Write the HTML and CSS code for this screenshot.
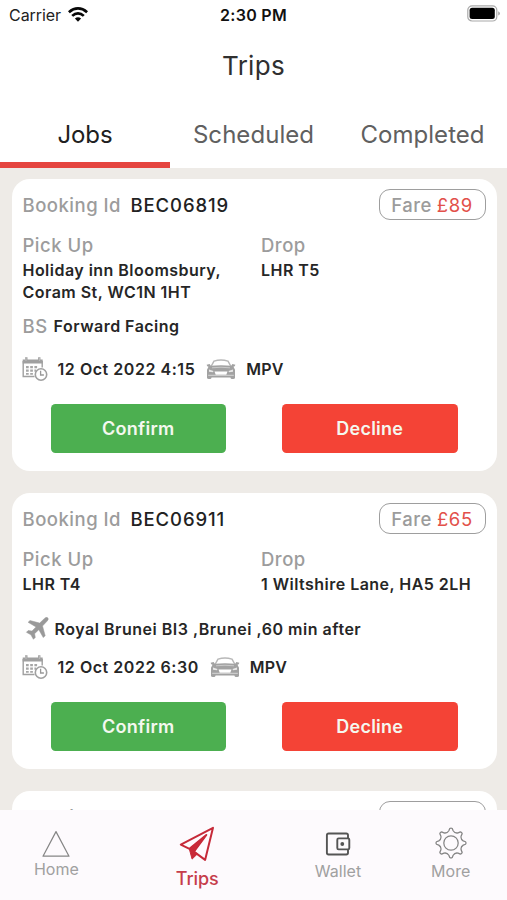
FILE: index.html
```html
<!DOCTYPE html>
<html lang="en">
<head>
<meta charset="utf-8">
<title>Trips</title>
<link rel="stylesheet" href="styles.css">
</head>
<body>
<svg class="defs" aria-hidden="true">
  <symbol id="calendar" viewBox="0 0 26 26">
    <path d="M1.200 5v15.500h11.300M20.200 5v6.500" fill="none" stroke="#a0a0a0" stroke-width="1.400"/>
    <path d="M.7 3.500h2.500V1.200h2.300v2.300h10.600V1.200h2.300v2.300h2.300v4H.7z" fill="#a0a0a0"/>
    <path d="M4 1v4M17.500 1v4" stroke="#b9b9b9" stroke-width="1.200"/>
    <path d="M4 10h2.700v2.300H4zM8.200 10h2.700v2.300H8.200zM12.400 10h2.700v2.300h-2.700zM4 13.500h2.700v2.300H4zM8.200 13.500h2.700v2.300H8.200zM12.400 13.500h1.700v2.300h-1.700zM4 17h2.700v1.700H4zM8.200 17h2.700v1.700H8.200z" fill="#a6a6a6"/>
    <circle cx="19" cy="18.500" r="5.700" fill="#fff" stroke="#a0a0a0" stroke-width="1.600"/>
    <path d="M18.600 14.800v4.200h3.300" fill="none" stroke="#989898" stroke-width="1.300"/>
  </symbol>
  <symbol id="car" viewBox="0 0 30 20">
    <path d="M5 7.500 8 2.100Q15-.3 22 2.100l3 5.400" fill="#fff" stroke="#b8b8b8" stroke-width="1.500"/>
    <path d="M.6 5.800 3.600 5l1.200 1.800q10.200-1 20.400 0L26.400 5l3 .8-.7 1.500-1.200.4 1.500 3.100v8.100q-.3 1-1.800 1h-1.600q-1-.1-1.200-1.500H5.600q-.2 1.400-1.200 1.500H2.800Q1.300 19.900 1 18.900v-8.100l1.500-3.100-1.200-.4z" fill="#a2a2a2"/>
    <path d="M3 10.500l4.500 1.600-.5 1.200-4-.6zM27 10.500l-4.500 1.600.5 1.200 4-.6z" fill="#e8e8e8"/>
    <path d="M6 8.800q9-1.100 18 0" stroke="#c9c9c9" fill="none"/>
    <path d="M8.500 12.500h13l-1.200 3.200H9.700z" fill="#fff"/>
    <path d="M2.200 16.300h25.600" stroke="#d6d6d6"/>
  </symbol>
  <symbol id="plane" viewBox="0 0 24 24">
    <path d="M22.700.8q1.300 1.200-.5 3.200l-4.700 5 2.700 9.700-1.900 1.900-4.500-7.900-4.200 4 .7 3.700-1.900 1.900-2.500-4.500-4.500-2.500 1.800-1.800 3.800.6 4-4.200L3.100 5.300 5 3.500l9.700 2.600 4.800-4.700Q21.500-.3 22.700.8z" fill="#999" stroke="#999" stroke-width=".5"/>
  </symbol>
</svg>
<div class="app">
  <header class="status">
    <div class="carrier"><span>Carrier</span>
      <svg width="20" height="15" viewBox="0 0 20 15"><g fill="none" stroke="#080808" stroke-width="2.700"><path d="M.9 5.200Q5.200 1.400 10 1.400t9.100 3.800"/><path d="M4.200 8.900Q6.900 6.300 10 6.300t5.800 2.600"/></g><path d="M10 14.700 6.900 11.500Q10 9 13.100 11.500z" fill="#080808"/></svg>
    </div>
    <div class="time">2:30 PM</div>
    <div class="battery"><svg width="33" height="17" viewBox="0 0 33 17"><rect x=".8" y=".8" width="29" height="15.200" rx="4.300" fill="#fff" stroke="#aaa" stroke-width="1.200"/><rect x="2.600" y="2.800" width="25.200" height="11.200" rx="2.500" fill="#000"/><path d="M31.300 6.200q1.500.8 1.500 2.200t-1.500 2.200z" fill="#999"/></svg></div>
  </header>
  <h1 class="title">Trips</h1>
  <nav class="tabs"><div class="tab active">Jobs</div><div class="tab">Scheduled</div><div class="tab">Completed</div></nav>

  <main class="list">
    <article class="card">
      <div class="head"><span class="label booking">Booking Id</span><span class="code">BEC06819</span><span class="fare"><span class="label">Fare</span><b>£89</b></span></div>
      <div class="places">
        <div><div class="label">Pick Up</div><div class="text">Holiday inn Bloomsbury,<br>Coram St, WC1N 1HT</div></div>
        <div><div class="label">Drop</div><div class="text">LHR T5</div></div>
      </div>
      <div class="seat"><span class="label">BS</span><span class="text">Forward Facing</span></div>
      <div class="when"><svg class="cal"><use href="#calendar"/></svg><span class="text date">12 Oct 2022 4:15</span><svg class="car"><use href="#car"/></svg><span class="text mpv">MPV</span></div>
      <div class="actions"><button class="confirm">Confirm</button><button class="decline">Decline</button></div>
    </article>

    <article class="card">
      <div class="head"><span class="label booking">Booking Id</span><span class="code">BEC06911</span><span class="fare"><span class="label">Fare</span><b>£65</b></span></div>
      <div class="places">
        <div><div class="label">Pick Up</div><div class="text">LHR T4</div></div>
        <div><div class="label">Drop</div><div class="text">1 Wiltshire Lane, HA5 2LH</div></div>
      </div>
      <div class="flight"><svg class="plane"><use href="#plane"/></svg><span class="text">Royal Brunei BI3 ,Brunei ,60 min after</span></div>
      <div class="when"><svg class="cal"><use href="#calendar"/></svg><span class="text date">12 Oct 2022 6:30</span><svg class="car"><use href="#car"/></svg><span class="text mpv">MPV</span></div>
      <div class="actions"><button class="confirm">Confirm</button><button class="decline">Decline</button></div>
    </article>

    <article class="card">
      <div class="head"><span class="label booking">Booking Id</span><span class="fare"></span></div>
    </article>
  </main>

  <footer class="bar">
    <div class="item home"><svg width="30" height="28" viewBox="0 0 30 28"><path d="M15 1.600 28 26.200H2z" fill="none" stroke="#858585" stroke-width="1.200" stroke-linejoin="round"/></svg><span>Home</span></div>
    <div class="item trips"><svg width="36" height="36" viewBox="0 0 36 36"><path d="M34 1.800 1.800 18.600l8.700 4.200L27.300 9 14.900 25.600l11.200 8.300z" fill="#fffafd" stroke="#c62a39" stroke-width="2" stroke-linejoin="round"/><path d="M27.300 9 10.300 22.900l2.800 10.200 5.300-5.200-3.300-2.400z" fill="#c92a38" stroke="#c92a38" stroke-linejoin="round"/></svg><span>Trips</span></div>
    <div class="item wallet"><svg width="26" height="24" viewBox="0 0 26 24"><g fill="none" stroke="#555" stroke-width="1.900" stroke-linejoin="round"><path d="M23 6.200V3.200Q23 1.500 21.300 1.500H3.600Q1.900 1.500 1.900 3.200v17.600q0 1.700 1.700 1.700h17.700q1.700 0 1.700-1.700v-3.200"/><rect x="12.300" y="6.400" width="12" height="11" rx="1.300"/></g><circle cx="17.300" cy="12" r="1.900" fill="#555"/></svg><span>Wallet</span></div>
    <div class="item more"><svg width="32" height="32" viewBox="-16 -16 32 32"><g fill="none" stroke="#858585" stroke-width="1.250" stroke-linejoin="round"><circle r="7.200"/><path id="gear"/></g></svg><span>More</span></div>
  </footer>
</div>
<script src="gear.js"></script>
</body>
</html>
```
FILE: styles.css
```css
* { box-sizing: border-box; }
body { margin: 0; font-family: Inter, "Liberation Sans", sans-serif; background: #eeebe7; }
.defs { display: none; }
.app { width: 507px; height: 900px; display: flex; flex-direction: column; overflow: hidden; }

.status { flex: none; height: 30px; background: #fff; display: grid; grid-template-columns: 1fr auto 1fr; font-size: 16px; color: #222; line-height: 30px; }
.carrier { display: flex; align-items: center; padding-left: 9px; gap: 7px; letter-spacing: -0.05px; }
.carrier svg { margin-top: -1px; }
.time { font-weight: 600; letter-spacing: 0.3px; color: #111; }
.battery { display: flex; justify-content: flex-end; padding: 5px 7px 0 0; }

.title { flex: none; margin: 0; height: 72px; background: #fff; text-align: center; font-size: 26px; font-weight: 400; line-height: 72px; letter-spacing: 0.3px; color: #303030; }
.tabs { flex: none; height: 66px; background: #fff; display: grid; grid-template-columns: repeat(3, 1fr); grid-template-rows: 66px; }
.tab { height: 66px; padding-top: 5px; text-align: center; font-size: 24px; line-height: 55px; letter-spacing: 0.05px; color: #606060; }
.tab.active { color: #202020; border-bottom: 6px solid #e5453f; letter-spacing: -0.1px; margin-right: -1px; }

.list { flex: 1; min-height: 0; overflow: hidden; padding: 11px 10.500px 0 11.500px; display: flex; flex-direction: column; gap: 22px; }
.card { flex: none; background: #fff; border-radius: 18px; padding: 10px 11px 18.500px 11px; }
.head { display: flex; align-items: center; height: 31px; }
.label { font-size: 18.500px; font-weight: 500; line-height: 22px; letter-spacing: 0.5px; color: #9c9c9c; }
.booking { width: 108px; }
.code { font-size: 18.500px; font-weight: 500; letter-spacing: 0.9px; color: #222; }
.fare { margin-left: auto; width: 107px; height: 31px; border: 1.500px solid #9e9e9e; border-radius: 11px; display: flex; align-items: center; justify-content: center; gap: 5px; }
.fare b { font-size: 18.500px; font-weight: 400; letter-spacing: 0.6px; color: #e2504a; }
.text { font-size: 16px; font-weight: 600; line-height: 22px; letter-spacing: 0.47px; color: #262626; white-space: nowrap; }
.places { display: grid; grid-template-columns: 238.500px 1fr; margin-top: 14px; }
.places .text { margin-top: 3px; }
.seat { display: flex; gap: 6px; margin-top: 12px; height: 22px; }
.flight { display: flex; align-items: center; height: 24px; margin-top: 22px; padding-left: 2px; }
.flight .text { letter-spacing: 0.52px; }
.plane { width: 24px; height: 24px; margin-right: 6px; }
.when { display: flex; align-items: center; height: 24px; margin-top: 20px; margin-left: -1px; }
.flight + .when { margin-top: 14px; }
.cal { width: 26px; height: 26px; }
.date { margin-left: 10px; letter-spacing: 0.54px; }
.car { width: 30px; height: 20px; margin-left: 11px; }
.mpv { margin-left: 10px; letter-spacing: 0.2px; }
.actions { display: flex; justify-content: space-between; margin-top: 23px; padding: 0 28px; }
.actions button { width: 175.500px; height: 48.500px; border: 0; border-radius: 4.500px; padding: 0; font: 600 18px Inter, "Liberation Sans", sans-serif; letter-spacing: 0.25px; color: #f4f8ef; }
.confirm { background: #4caf50; }
.decline { background: #f44336; }

.bar { flex: none; height: 90px; background: #fdfafd; display: grid; grid-template-columns: 2fr 3fr 2fr 2fr; font-size: 16px; line-height: 20px; color: #a0a0a0; }
.item { display: flex; flex-direction: column; align-items: center; }
.home { padding-top: 20px; }
.home span { margin-top: 1px; }
.trips { padding-top: 16px; font-size: 18px; color: #c63d4b; }
.trips span { margin-top: 7px; font-weight: 500; letter-spacing: -0.1px; }
.wallet { padding-top: 22px; }
.wallet span { margin-top: 5px; }
.more { padding-top: 17px; }
.more span { margin-top: 2px; }
```
FILE: gear.js
```js
// Eight rounded teeth with curved valleys between them.
const point = (r, deg) => {
  const a = deg * Math.PI / 180;
  return (r * Math.sin(a)).toFixed(2) + ' ' + (-r * Math.cos(a)).toFixed(2);
};
let d = 'M' + point(14.6, -5);
for (let i = 0; i < 8; i++) {
  const a = i * 45;
  d += 'Q' + point(15.4, a) + ' ' + point(14.6, a + 5);
  d += 'L' + point(12.4, a + 10);
  d += 'Q' + point(10.2, a + 22.5) + ' ' + point(12.4, a + 35);
  d += 'L' + point(14.6, a + 40);
}
document.getElementById('gear').setAttribute('d', d + 'Z');
```
